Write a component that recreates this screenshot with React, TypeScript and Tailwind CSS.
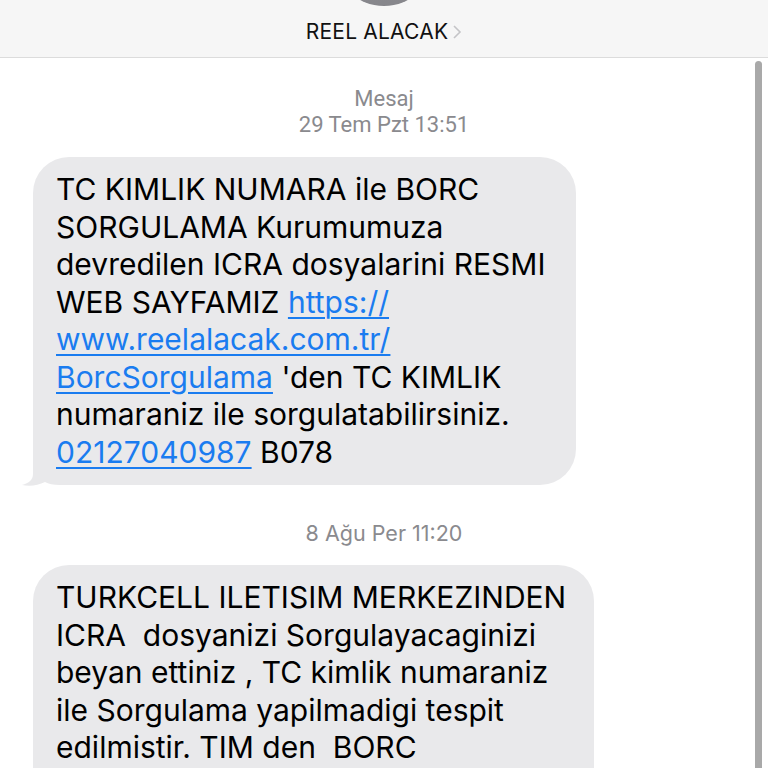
import React from 'react';

const font = { fontFamily: 'Inter, "Noto Sans", sans-serif' };

type Part = { t: string; link?: boolean };

const first: Part[][] = [
    [{ t: 'TC KIMLIK NUMARA ile BORC' }],
    [{ t: 'SORGULAMA Kurumumuza' }],
    [{ t: 'devredilen ICRA dosyalarini RESMI' }],
    [{ t: 'WEB SAYFAMIZ ' }, { t: 'https://', link: true }],
    [{ t: 'www.reelalacak.com.tr/', link: true }],
    [{ t: 'BorcSorgulama', link: true }, { t: " 'den TC KIMLIK" }],
    [{ t: 'numaraniz ile sorgulatabilirsiniz.' }],
    [{ t: '02127040987', link: true }, { t: ' B078' }],
];

// only the part of the second message that is on screen
const second: Part[][] = [
    [{ t: 'TURKCELL ILETISIM MERKEZINDEN' }],
    [{ t: 'ICRA  dosyanizi Sorgulayacaginizi' }],
    [{ t: 'beyan ettiniz , TC kimlik numaraniz' }],
    [{ t: 'ile Sorgulama yapilmadigi tespit' }],
    [{ t: 'edilmistir. TIM den  BORC' }],
];

function Lines({ lines }: { lines: Part[][] }) {
    return (
        <>
            {lines.map((line, i) => (
                <div key={i} className="whitespace-pre">
                    {line.map((p, j) =>
                        p.link ? (
                            <span key={j} className="text-[#1a7cf0] underline decoration-[1.5px] underline-offset-[4px]">
                                {p.t}
                            </span>
                        ) : (
                            <span key={j}>{p.t}</span>
                        )
                    )}
                </div>
            ))}
        </>
    );
}

function Tail() {
    return (
        <svg
            className="absolute left-[-11px] bottom-0 overflow-visible"
            width="48"
            height="55"
            viewBox="0 0 48 55"
        >
            <path
                d="M11 0 L11 44 C11 50 7 53 0 55 C8 56.5 16 55.5 23 52 Q28 55 38 55 L48 55 L48 0 Z"
                fill="#e9e9eb"
            />
        </svg>
    );
}

export default function App() {
    return (
        <div className="relative w-[768px] h-[768px] overflow-hidden bg-white" style={font}>
            {/* header */}
            <div className="relative h-[58px] bg-[#f6f6f6] border-b border-[#dcdcdc] flex justify-center">
                <div className="absolute top-[-94px] left-[334px] w-[100px] h-[100px] rounded-full bg-gradient-to-b from-[#a4a4a8] to-[#86868b]" />
                <div className="pt-[7px] flex items-center gap-[4px] text-[21px] leading-[28px] text-[#111] tracking-[0.2px]">
                    <span>REEL ALACAK</span>
                    <svg width="10" height="16" viewBox="0 0 10 16">
                        <path d="M2 2 L8 8 L2 14" fill="none" stroke="#c4c4c7" strokeWidth="1.6" />
                    </svg>
                </div>
            </div>

            {/* scrollbar */}
            <div className="absolute left-[755px] top-[61px] w-[7px] h-[720px] rounded-full bg-[#a9a9a9]" />

            {/* conversation */}
            <div className="flex flex-col">
                <div className="pt-[28px] text-center text-[22px] leading-[26px] text-[#8a8a8e]" style={{ fontFamily: 'Roboto, sans-serif' }}>
                    <div>Mesaj</div>
                    <div>29 Tem Pzt 13:51</div>
                </div>

                <div className="pl-[33px] pt-[19px]">
                    <div className="relative w-[543px] rounded-[36px] bg-[#e9e9eb] pl-[23px] py-[14px] text-[30px] leading-[37.5px] text-black">
                        <Tail />
                        <div className="relative">
                            <Lines lines={first} />
                        </div>
                    </div>
                </div>

                <div className="pt-[35px] text-center text-[21.5px] leading-[26px] text-[#8a8a8e]">
                    8 Ağu Per 11:20
                </div>

                <div className="pl-[33px] pt-[19px]">
                    <div className="relative w-[561px] rounded-t-[36px] bg-[#e9e9eb] pl-[23px] pt-[14px] pb-[60px] text-[30px] leading-[37.5px] text-black">
                        <Lines lines={second} />
                    </div>
                </div>
            </div>
        </div>
    );
}
